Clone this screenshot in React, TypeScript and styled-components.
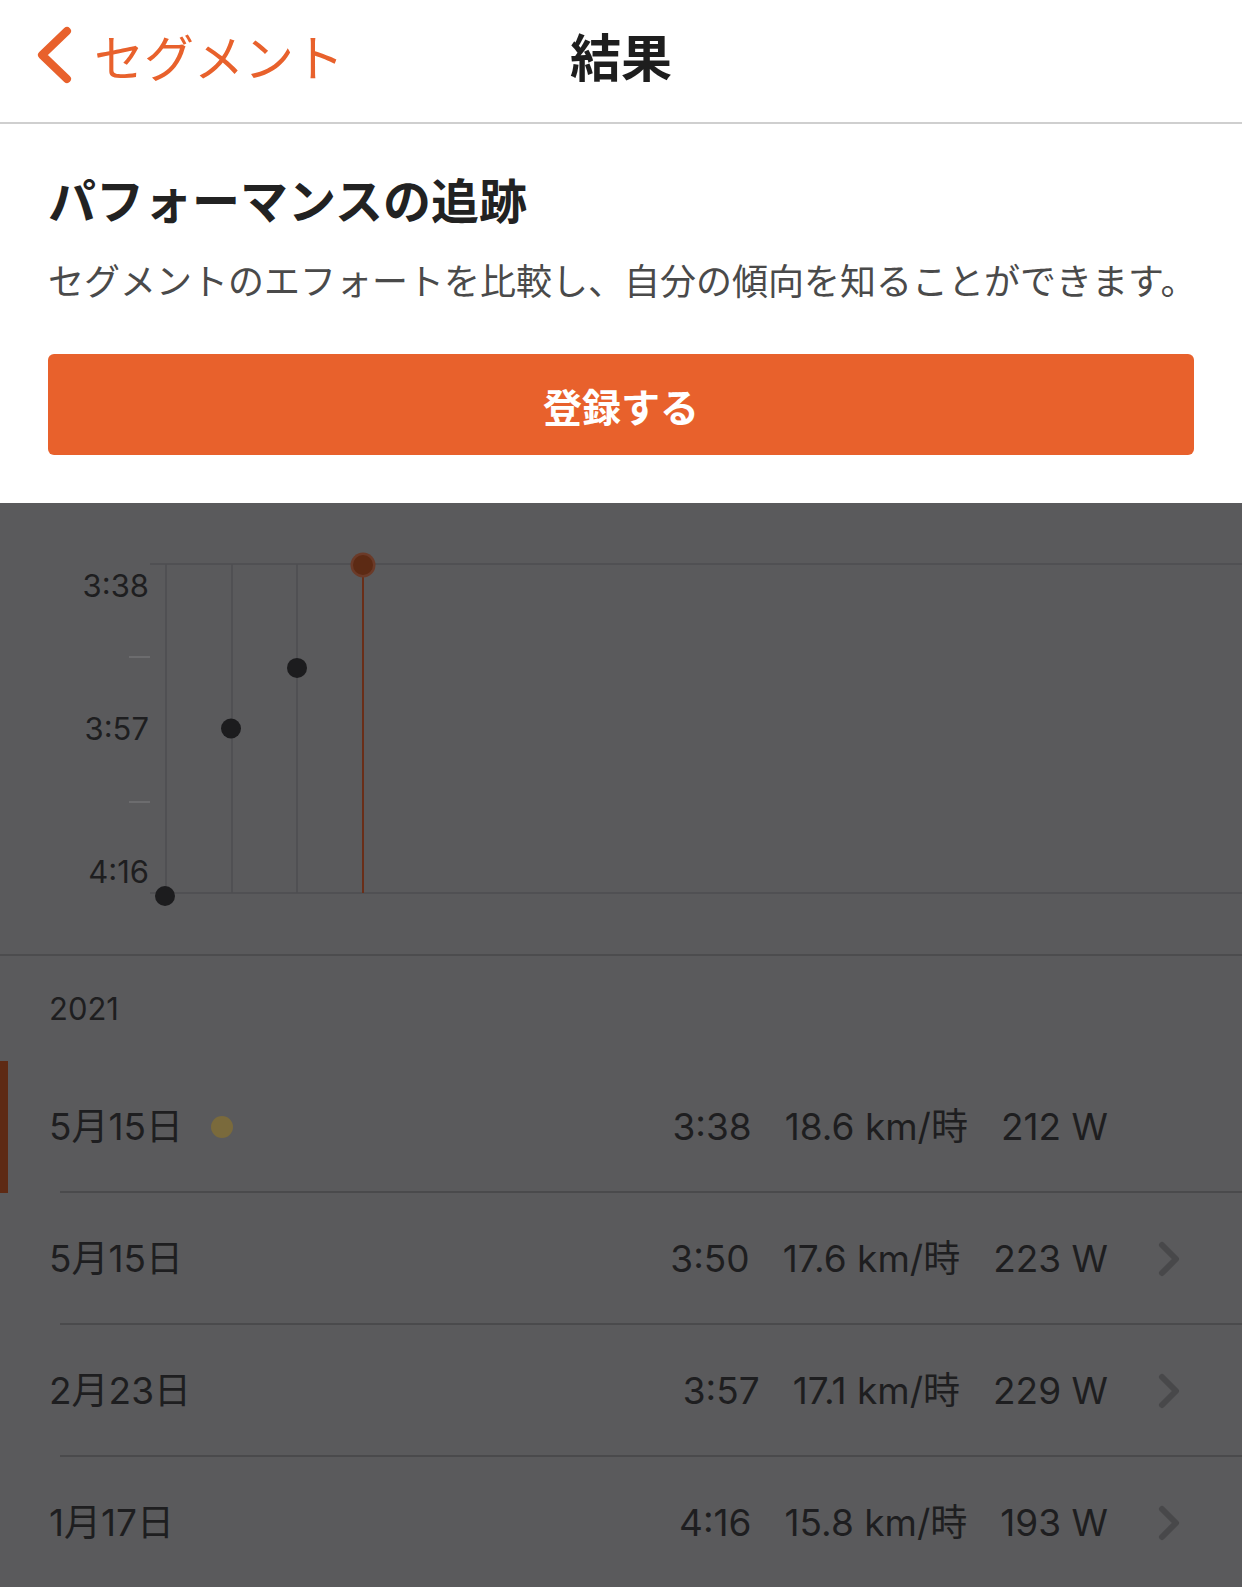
import React from 'react'
import styled, { createGlobalStyle } from 'styled-components'

const GlobalStyle = createGlobalStyle`
  html, body {
    margin: 0;
    padding: 0;
    background: #5a5a5c;
  }
  body {
    font-family: Inter, "Noto Sans CJK JP", sans-serif;
    -webkit-font-smoothing: antialiased;
  }
`

const ORANGE = '#e8612c'
const DIM_TEXT = '#1e1e20'

interface Effort {
    date: string
    time: string
    speed: string
    power: string
    selected?: boolean
}

const efforts: Effort[] = [
    { date: '5月15日', time: '3:38', speed: '18.6 km/時', power: '212 W', selected: true },
    { date: '5月15日', time: '3:50', speed: '17.6 km/時', power: '223 W' },
    { date: '2月23日', time: '3:57', speed: '17.1 km/時', power: '229 W' },
    { date: '1月17日', time: '4:16', speed: '15.8 km/時', power: '193 W' },
]

// chart scale: 3:38 at the top line, 4:16 at the bottom line
const TOP_Y = 61
const BOTTOM_Y = 390
const secToY = (s: number) => TOP_Y + ((s - 218) / (256 - 218)) * (BOTTOM_Y - TOP_Y)

const points = [
    { x: 165, sec: 256 },
    { x: 231, sec: 237 },
    { x: 297, sec: 230 },
]

export default function App() {
    return (
        <Page>
            <GlobalStyle />
            <NavBar>
                <BackButton>
                    <svg width="40" height="60" viewBox="0 0 40 60">
                        <path d="M33 6 L8 30 L33 54" fill="none" stroke={ORANGE} strokeWidth="8"
                            strokeLinecap="round" strokeLinejoin="round" />
                    </svg>
                    <BackLabel>セグメント</BackLabel>
                </BackButton>
                <NavTitle>結果</NavTitle>
                <span />
            </NavBar>

            <Promo>
                <PromoTitle>パフォーマンスの追跡</PromoTitle>
                <PromoText>セグメントのエフォートを比較し、自分の傾向を知ることができます。</PromoText>
                <PrimaryButton>登録する</PrimaryButton>
            </Promo>

            <ChartSection>
                <svg width="1242" height="451" viewBox="0 0 1242 451">
                    <line x1="150" y1={TOP_Y} x2="1242" y2={TOP_Y} stroke="#4e4e50" strokeWidth="1.5" />
                    <line x1="150" y1={BOTTOM_Y} x2="1242" y2={BOTTOM_Y} stroke="#4e4e50" strokeWidth="1.5" />
                    <line x1="129" y1="154" x2="150" y2="154" stroke="#6c6c6e" strokeWidth="2" />
                    <line x1="129" y1="299" x2="150" y2="299" stroke="#6c6c6e" strokeWidth="2" />
                    {[166, 232, 297].map(x => (
                        <line key={x} x1={x} y1={TOP_Y} x2={x} y2={BOTTOM_Y} stroke="#4e4e50" strokeWidth="1.5" />
                    ))}
                    <line x1="363" y1={TOP_Y} x2="363" y2={BOTTOM_Y} stroke="#6a2e18" strokeWidth="2" />
                    <g fontFamily="Inter, sans-serif" fontSize="31" fill={DIM_TEXT} textAnchor="end">
                        <text x="149" y="94">3:38</text>
                        <text x="149" y="237">3:57</text>
                        <text x="149" y="380">4:16</text>
                    </g>
                    {points.map(p => (
                        <circle key={p.x} cx={p.x} cy={secToY(p.sec) + (p.sec === 256 ? 3 : 0)} r="10" fill="#1c1c1e" />
                    ))}
                    <circle cx="363" cy="62" r="12.5" fill="#6b3a28" />
                    <circle cx="363" cy="62" r="10" fill="#5c2a14" />
                </svg>
            </ChartSection>

            <YearHeader>2021</YearHeader>
            <List>
                {efforts.map((e, i) => (
                    <Row key={i} selected={e.selected}>
                        <DateCell>
                            {e.date}
                            {e.selected && <PrDot />}
                        </DateCell>
                        <Values>
                            <span>{e.time}</span>
                            <span>{e.speed}</span>
                            <span>{e.power}</span>
                        </Values>
                        <ChevronCell>
                            {!e.selected && (
                                <svg width="22" height="36" viewBox="0 0 22 36">
                                    <path d="M4 4 L18 18 L4 32" fill="none" stroke="#48484a" strokeWidth="6"
                                        strokeLinecap="round" strokeLinejoin="round" />
                                </svg>
                            )}
                        </ChevronCell>
                    </Row>
                ))}
            </List>
        </Page>
    )
}

const Page = styled.div`
  width: 1242px;
  min-height: 1587px;
  background: #5a5a5c;
  overflow: hidden;
`

const NavBar = styled.header`
  height: 122px;
  background: #fff;
  border-bottom: 2px solid #cfcfcf;
  display: grid;
  grid-template-columns: 1fr auto 1fr;
  align-items: center;
`

const BackButton = styled.div`
  display: flex;
  align-items: center;
  padding-left: 34px;
  gap: 20px;
  margin-top: -12px;
`

const BackLabel = styled.span`
  font-family: "Noto Sans CJK JP", sans-serif;
  font-size: 50px;
  color: ${ORANGE};
`

const NavTitle = styled.h1`
  margin: -12px 0 0;
  font-family: "Noto Sans CJK JP", sans-serif;
  font-size: 51px;
  font-weight: 700;
  color: #1e1e1e;
`

const Promo = styled.section`
  background: #fff;
  padding: 44px 48px 48px;
  display: flex;
  flex-direction: column;
`

const PromoTitle = styled.h2`
  margin: 0;
  font-family: "Noto Sans CJK JP", sans-serif;
  font-size: 48px;
  line-height: 60px;
  font-weight: 700;
  color: #222;
`

const PromoText = styled.p`
  margin: 26px 0 0;
  font-family: "Noto Sans CJK JP", sans-serif;
  font-size: 36px;
  line-height: 50px;
  color: #4a4a4a;
  white-space: nowrap;
`

const PrimaryButton = styled.button`
  margin-top: 50px;
  height: 101px;
  border: none;
  border-radius: 6px;
  background: ${ORANGE};
  color: #fff;
  font-family: "Noto Sans CJK JP", sans-serif;
  font-size: 39px;
  font-weight: 700;
`

const ChartSection = styled.section`
  height: 451px;
  border-bottom: 2px solid #4c4c4e;
  svg {
    display: block;
  }
`

const YearHeader = styled.div`
  height: 105px;
  padding: 0 49px;
  display: flex;
  align-items: center;
  font-size: 31px;
  color: ${DIM_TEXT};
`

const List = styled.div`
  display: flex;
  flex-direction: column;
`

const Row = styled.div<{ selected?: boolean }>`
  height: 132px;
  display: flex;
  align-items: center;
  padding: 0 48px 0 49px;
  font-size: 37px;
  line-height: 50px;
  color: ${DIM_TEXT};
  background: linear-gradient(#4a4a4c, #4a4a4c) no-repeat 60px 100% / calc(100% - 60px) 2px;
  box-shadow: ${p => (p.selected ? 'inset 8px 0 0 #5e2a14' : 'none')};
`

const DateCell = styled.div`
  display: flex;
  align-items: center;
  gap: 28px;
  flex: 1;
`

const PrDot = styled.span`
  width: 22px;
  height: 22px;
  border-radius: 50%;
  background: #7a6a3c;
`

const Values = styled.div`
  display: flex;
  align-items: baseline;
  gap: 33px;
  white-space: nowrap;
`

const ChevronCell = styled.div`
  width: 86px;
  display: flex;
  justify-content: flex-end;
  padding-right: 14px;
  box-sizing: border-box;
`
